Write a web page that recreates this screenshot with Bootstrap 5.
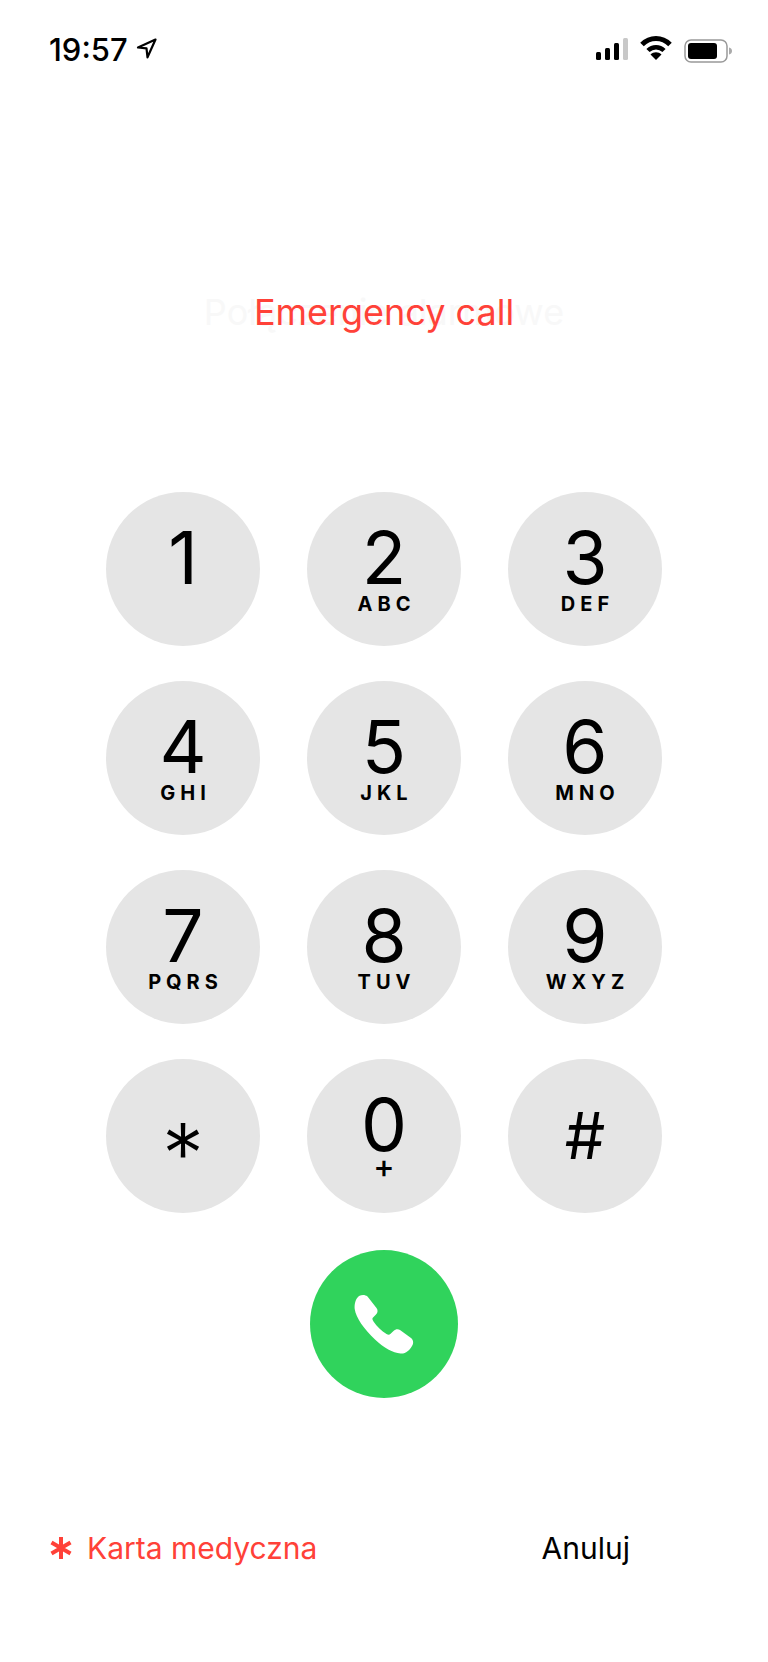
<!DOCTYPE html>
<html lang="pl">
<head>
  <meta charset="UTF-8">
  <meta name="viewport" content="width=device-width, initial-scale=1">
  <title>Połączenie alarmowe</title>
  <link href="https://cdn.jsdelivr.net/npm/bootstrap@5.3.3/dist/css/bootstrap.min.css" rel="stylesheet">
  <script src="https://cdn.jsdelivr.net/npm/bootstrap@5.3.3/dist/js/bootstrap.bundle.min.js"></script>
  <style>
    body {
      font-family: Inter, "Liberation Sans", sans-serif;
      background: #fff;
      color: #000;
      height: 1662px;
      overflow: hidden;
    }
    .status-bar {
      height: 96px;
      padding: 35px 34px 0 49px;
    }
    .clock {
      font-size: 31px;
      line-height: 30px;
      font-weight: 500;
    }
    .loc-arrow {
      margin-left: 8px;
      margin-top: 3px;
    }
    .signal-icon {
      margin-right: 11px;
      margin-top: 2px;
    }
    .wifi-icon {
      margin-right: 12px;
    }
    .title-wrap {
      height: 60px;
      margin-top: 186px;
    }
    .title-ghost {
      font-size: 36px;
      line-height: 60px;
      color: #f8f8f8;
    }
    .title-front {
      font-size: 36px;
      line-height: 60px;
      color: #ff4138;
    }
    .keypad {
      display: grid;
      grid-template-columns: repeat(3, 154px);
      column-gap: 47px;
      row-gap: 35px;
      margin-top: 150px;
    }
    .key-btn {
      width: 154px;
      height: 154px;
      background: #e5e5e5;
      color: #000;
      padding-top: 29px;
    }
    .key-num {
      font-size: 73px;
      line-height: 73px;
      font-weight: 400;
    }
    .key-sub {
      font-size: 20px;
      line-height: 20px;
      font-weight: 700;
      letter-spacing: 5px;
      padding-left: 5px;
    }
    .key-plus {
      font-size: 32px;
      line-height: 20px;
      font-weight: 500;
      letter-spacing: 0;
      padding-left: 0;
      margin-top: -4px;
    }
    .key-star {
      font-size: 84px;
      line-height: 84px;
      font-weight: 300;
      padding-top: 24px;
    }
    .key-hash {
      font-size: 64px;
      line-height: 73px;
      padding-top: 11px;
    }
    .call-btn {
      width: 148px;
      height: 148px;
      background: #30d35c;
      margin-top: 37px;
    }
    .foot-bar {
      margin-top: 128px;
      padding: 0 138px 0 50px;
      font-size: 30px;
      line-height: 44px;
    }
    .foot-red {
      color: #ff4138;
      gap: 15px;
    }
  </style>
</head>
<body>
  <div class="status-bar d-flex justify-content-between align-items-start">
    <div class="d-flex align-items-start">
      <span class="clock">19:57</span>
      <svg width="21" height="21" viewBox="0 0 21 21" class="loc-arrow" fill="none" stroke="#000" stroke-width="2.2" stroke-linejoin="round">
        <path d="M19.500 1.500 2 9.500l8.500.8 1 9z"/>
      </svg>
    </div>
    <div class="d-flex align-items-start">
      <svg width="34" height="24" viewBox="0 0 34 24" class="signal-icon">
        <rect x="1" y="15" width="5" height="8" rx="1.500" fill="#000"/>
        <rect x="10" y="11" width="5" height="12" rx="1.500" fill="#000"/>
        <rect x="19" y="6" width="5" height="17" rx="1.500" fill="#000"/>
        <rect x="28" y="1" width="5" height="22" rx="1.500" fill="#c8c8c8"/>
      </svg>
      <svg width="32" height="25" viewBox="0 0 32 25" class="wifi-icon">
        <path d="M2 9.500C10 1.500 22 1.500 30 9.500" fill="none" stroke="#000" stroke-width="5"/>
        <path d="M8 15.500C12.500 11 19.500 11 24 15.500" fill="none" stroke="#000" stroke-width="4.500"/>
        <path d="M16 25l-5.500-5.500c3-3 8-3 11 0z" fill="#000"/>
      </svg>
      <svg width="50" height="25" viewBox="0 0 50 25" class="mt-1">
        <rect x="1" y="1" width="42" height="22" rx="6" fill="none" stroke="#999" stroke-width="1.500"/>
        <rect x="4" y="4" width="29" height="16" rx="3" fill="#000"/>
        <path d="M45 8.500c2 .3 3 1.700 3 3.500s-1 3.200-3 3.500z" fill="#aaa"/>
      </svg>
    </div>
  </div>

  <div class="title-wrap position-relative text-center">
    <div class="title-ghost">Połączenie alarmowe</div>
    <div class="title-front position-absolute top-0 start-0 end-0">Emergency call</div>
  </div>

  <div class="keypad justify-content-center">
    <button class="key-btn border-0 rounded-circle d-flex flex-column align-items-center pb-0"><span class="key-num">1</span></button>
    <button class="key-btn border-0 rounded-circle d-flex flex-column align-items-center pb-0"><span class="key-num">2</span><span class="key-sub">ABC</span></button>
    <button class="key-btn border-0 rounded-circle d-flex flex-column align-items-center pb-0"><span class="key-num">3</span><span class="key-sub">DEF</span></button>
    <button class="key-btn border-0 rounded-circle d-flex flex-column align-items-center pb-0"><span class="key-num">4</span><span class="key-sub">GHI</span></button>
    <button class="key-btn border-0 rounded-circle d-flex flex-column align-items-center pb-0"><span class="key-num">5</span><span class="key-sub">JKL</span></button>
    <button class="key-btn border-0 rounded-circle d-flex flex-column align-items-center pb-0"><span class="key-num">6</span><span class="key-sub">MNO</span></button>
    <button class="key-btn border-0 rounded-circle d-flex flex-column align-items-center pb-0"><span class="key-num">7</span><span class="key-sub">PQRS</span></button>
    <button class="key-btn border-0 rounded-circle d-flex flex-column align-items-center pb-0"><span class="key-num">8</span><span class="key-sub">TUV</span></button>
    <button class="key-btn border-0 rounded-circle d-flex flex-column align-items-center pb-0"><span class="key-num">9</span><span class="key-sub">WXYZ</span></button>
    <button class="key-btn border-0 rounded-circle d-flex flex-column align-items-center pb-0"><span class="key-num key-star">*</span></button>
    <button class="key-btn border-0 rounded-circle d-flex flex-column align-items-center pb-0"><span class="key-num">0</span><span class="key-sub key-plus">+</span></button>
    <button class="key-btn border-0 rounded-circle d-flex flex-column align-items-center pb-0"><span class="key-num key-hash">#</span></button>
  </div>

  <button class="call-btn border-0 rounded-circle d-flex align-items-center justify-content-center mx-auto p-0">
    <svg width="60" height="60" viewBox="0 0 60 60" fill="#fff">
      <path d="M5 2C8 .5 11 .5 13.500 2.500L22.500 14C24 16 24 18.500 22 20.500L18.800 23.800C18 24.600 18.500 26 19.500 27.500C23 32.500 27.500 37 32.500 40C34 41 35.500 41 36.300 40L39.500 37C41.500 35 44 34.700 46 36L57 44C59.500 46 59.800 49.500 58 52C55.500 56.500 51.500 60 46.500 59.500C39 58.700 30 54 21 45.500C10 35 2 24 .7 15C.2 10 1.500 5 5 2Z"/>
    </svg>
  </button>

  <div class="foot-bar d-flex justify-content-between align-items-center">
    <div class="foot-red d-flex align-items-center">
      <svg width="22" height="24" viewBox="0 0 22 24" stroke="#ff4138" stroke-width="4">
        <path d="M11 1v22M1.500 6.500l19 11M20.500 6.500l-19 11"/>
      </svg>
      <span>Karta medyczna</span>
    </div>
    <span>Anuluj</span>
  </div>
</body>
</html>
